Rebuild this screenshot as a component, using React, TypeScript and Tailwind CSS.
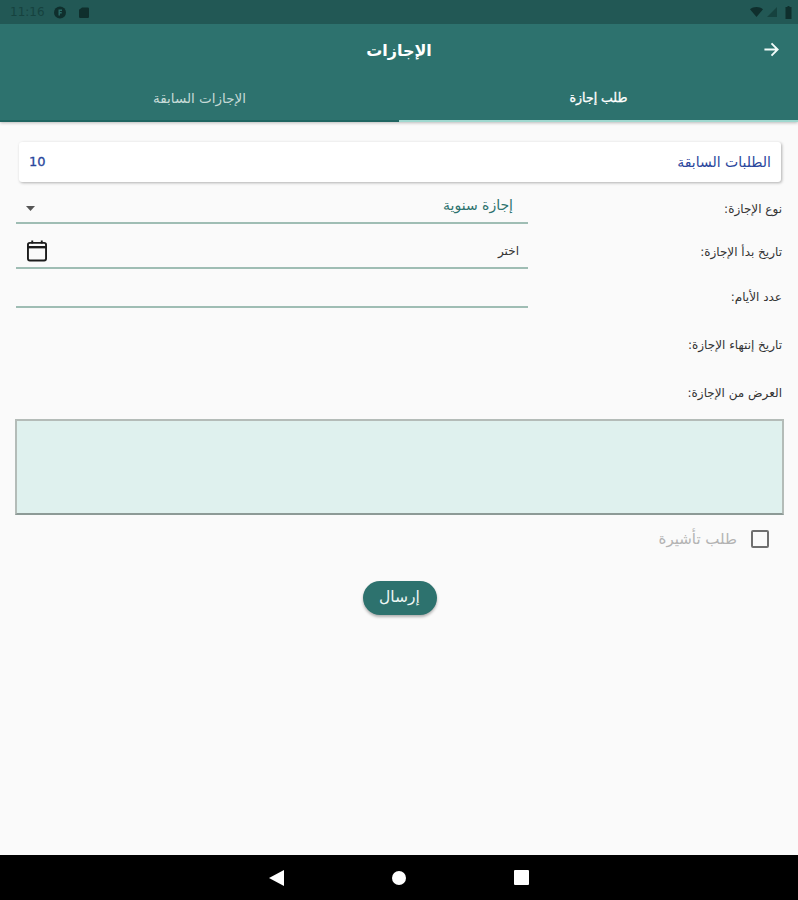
const FONT = "font-['DejaVu_Sans','Noto_Sans',sans-serif]";

function FormRow({ label, height, labelPad, children }: { label: string; height: string; labelPad?: string; children?: React.ReactNode }) {
  return (
    <div className={`flex ${height}`}>
      <div className="w-[512px] ml-[16px] shrink-0 flex flex-col">{children}</div>
      <div className={`flex-1 flex items-center justify-end pr-[16px] text-[12px] text-[#333] whitespace-nowrap ${labelPad ?? ""}`}>
        <span className="w-full text-right" dir="rtl">{label}</span>
      </div>
    </div>
  );
}

function Underlined({ children }: { children?: React.ReactNode }) {
  return (
    <div className="flex-1 flex items-center justify-between border-b-2 border-[#9fbdb4]">{children}</div>
  );
}

export default function App() {
  return (
    <div className={`w-[798px] h-[900px] flex flex-col bg-[#fafafa] overflow-hidden ${FONT}`}>
      {/* status bar */}
      <div className="h-[24px] bg-[#225855] flex items-center justify-between pl-[10px] pr-[6px] shrink-0">
        <div className="flex items-center">
          <span className="text-[12px] text-[#16423f] w-[43px] whitespace-nowrap">11:16</span>
          <svg width="14" height="13" viewBox="0 0 13 13">
            <circle cx="6.5" cy="6.5" r="6" fill="#0f2f2d" />
            <path d="M5 3.5h3.5v1.4H6.4v1.2h1.8v1.3H6.4v2.2H5z" fill="#2a6a66" />
          </svg>
          <svg width="10" height="11" viewBox="0 0 8 12" className="ml-[12px]" preserveAspectRatio="none">
            <path d="M2.5 0.5H7a1 1 0 0 1 1 1v9.5a1 1 0 0 1-1 1H1a1 1 0 0 1-1-1V3z" fill="#0f2f2d" />
          </svg>
        </div>
        <div className="flex items-center">
          <svg width="13" height="10" viewBox="0 0 12 10" preserveAspectRatio="none"><path d="M0 2.2C3.2-.7 8.8-.7 12 2.2L6 10z" fill="#0f2f2d" /></svg>
          <svg width="10" height="10" viewBox="0 0 9 9" className="ml-[4px]"><path d="M9 0v9H0z" fill="#16423f" /></svg>
          <svg width="7" height="13" viewBox="0 0 7 12" className="ml-[8px]" preserveAspectRatio="none"><path d="M2 0h2v1h2v11H0V1h2z" transform="translate(0.5 0)" fill="#0f2f2d" /></svg>
        </div>
      </div>

      {/* app bar */}
      <div className="h-[52px] bg-[#2d726e] flex items-center justify-center relative shrink-0">
        <span className="text-[16px] font-bold text-white pt-[2px]" dir="rtl">الإجازات</span>
        <svg className="absolute right-[18px] top-[17px]" width="17" height="17" viewBox="0 0 18 18" fill="none" stroke="#f2fbf9" strokeWidth="2">
          <path d="M1.5 9H15M9 2.5 15.5 9 9 15.5" />
        </svg>
      </div>

      {/* tabs */}
      <div className="h-[46px] bg-[#2d726e] flex shrink-0 shadow-[0_1px_3px_rgba(0,0,0,0.25)]">
        <div className="w-1/2 flex items-center justify-center border-b-2 border-[#1f6561]">
          <span className="text-[13.5px] text-[#c6dad7]" dir="rtl">الإجازات السابقة</span>
        </div>
        <div className="w-1/2 flex items-center justify-center border-b-2 border-[#9fd8cf]">
          <span className="text-[12.5px] text-white [-webkit-text-stroke:0.3px_white]" dir="rtl">طلب إجازة</span>
        </div>
      </div>

      {/* content */}
      <div className="flex-1 flex flex-col">
        <div className="mt-[20px] ml-[19px] mr-[17px] h-[40px] bg-white rounded-[3px] shadow-[1px_1px_3px_rgba(0,0,0,0.3)] flex items-center justify-between pl-[10px] pr-[10px] text-[14px] text-[#2a469c] shrink-0">
          <span className="text-[13px] [-webkit-text-stroke:0.3px_#2a469c]">10</span>
          <span dir="rtl">الطلبات السابقة</span>
        </div>

        <div className="mt-[8px] flex flex-col">
          <FormRow label="نوع الإجازة:" height="h-[34px]" labelPad="pt-[4px]">
            <Underlined>
              <svg className="ml-[10px] mt-[4px]" width="9" height="5" viewBox="0 0 9 5"><path d="M0 0h9L4.5 5z" fill="#555" /></svg>
              <span className="mr-[15px] pb-[2px] text-[14px] text-[#2d726e]" dir="rtl">إجازة سنوية</span>
            </Underlined>
          </FormRow>
          <div className="h-[11px]" />
          <FormRow label="تاريخ بدأ الإجازة:" height="h-[34px]">
            <Underlined>
              <svg className="ml-[11px]" width="20" height="22" viewBox="0 0 21 22" fill="none">
                <path d="M5.5 0v3M15.5 0v3" stroke="#1c1c1c" strokeWidth="2" />
                <rect x="1" y="2.5" width="19" height="18.5" rx="2" stroke="#1c1c1c" strokeWidth="2" />
                <path d="M1 7h19" stroke="#1c1c1c" strokeWidth="2.5" />
              </svg>
              <span className="mr-[9px] text-[12px] text-[#333]" dir="rtl">اختر</span>
            </Underlined>
          </FormRow>
          <FormRow label="عدد الأيام:" height="h-[39px]" labelPad="pt-[16px]">
            <Underlined />
          </FormRow>
          <FormRow label="تاريخ إنتهاء الإجازة:" height="h-[60px]" labelPad="pt-[14px]" />
          <FormRow label="العرض من الإجازة:" height="h-[50px]" />
        </div>

        <div className="mt-[1px] ml-[15px] mr-[14px] h-[96px] bg-[#dff1ee] border-2 border-t-[#b4bcb8] border-x-[#b4bcb8] border-b-[#8d9a96] shrink-0" />

        <div className="mt-[13px] flex items-center justify-end pr-[29px] gap-[14px]">
          <span className="text-[15px] text-[#b3b3b3]" dir="rtl">طلب تأشيرة</span>
          <div className="w-[18px] h-[18px] border-2 border-[#6f6f6f] rounded-[2px]" />
        </div>

        <div className="mt-[30px] flex justify-center">
          <button className="w-[74px] h-[34px] ml-[1px] rounded-full bg-[#2d726e] text-[15.5px] text-[#eef7f5] shadow-[0_2px_3px_rgba(0,0,0,0.3)]" dir="rtl">إرسال</button>
        </div>
      </div>

      {/* nav bar */}
      <div className="h-[45px] bg-black flex items-center justify-center gap-[108px] shrink-0 pr-[1px]">
        <svg width="15" height="16" viewBox="0 0 15 16"><path d="M15 0v16L0 8z" fill="#fff" /></svg>
        <svg width="14" height="14" viewBox="0 0 14 14"><circle cx="7" cy="7" r="7" fill="#fff" /></svg>
        <svg width="15" height="15" viewBox="0 0 15 15"><rect width="15" height="15" rx="1" fill="#fff" /></svg>
      </div>
    </div>
  );
}
